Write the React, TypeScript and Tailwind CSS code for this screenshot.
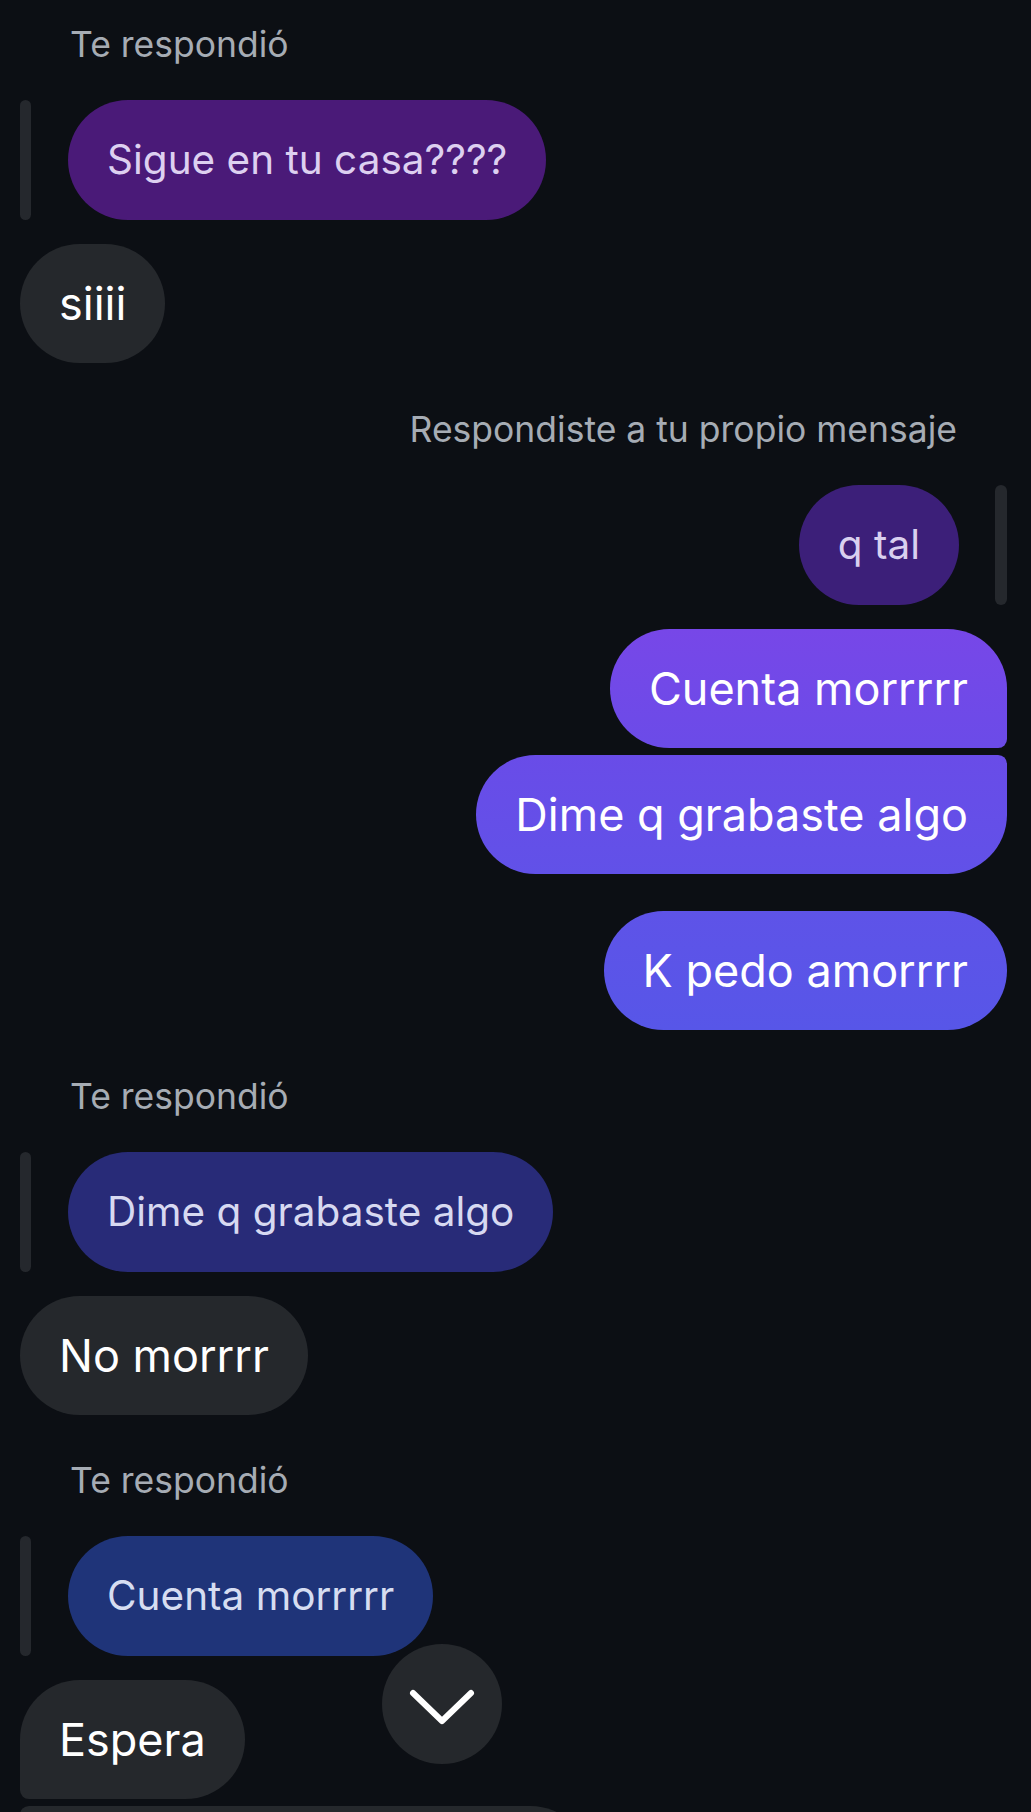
function Label({ text, right }: { text: string; right?: boolean }) {
	return (
		<p className={`text-[35.5px] leading-[42px] text-[#a6acb4] mb-[34px] ${right ? "self-end pr-[50px]" : "pl-[50px]"}`}>
			{text}
		</p>
	)
}

function ReplyIn({ text, bubble }: { text: string; bubble: string }) {
	return (
		<div className="flex items-stretch gap-[37px]">
			<div className="w-[11px] rounded-full bg-[#25282d]" />
			<div className={`rounded-full px-[39px] py-[36px] text-[40.5px] leading-[48px] ${bubble}`}>
				{text}
			</div>
		</div>
	)
}

function ReplyOut({ text, bubble }: { text: string; bubble: string }) {
	return (
		<div className="flex items-stretch gap-[36px] self-end">
			<div className={`rounded-full px-[39px] py-[36px] text-[40.5px] leading-[48px] ${bubble}`}>
				{text}
			</div>
			<div className="w-[12px] rounded-full bg-[#25282d]" />
		</div>
	)
}

function Msg({ text, className }: { text: string; className: string }) {
	return (
		<div className={`px-[39px] py-[36px] text-[45px] leading-[47px] ${className}`}>
			{text}
		</div>
	)
}

export default function App() {
	return (
		<div className="relative h-screen overflow-hidden bg-[#0c0f14] font-['Inter','Noto_Sans',sans-serif]">
			<div className="flex flex-col items-start pl-[20px] pr-[24px] pt-[24px]">
				<Label text="Te respondió" />
				<ReplyIn text="Sigue en tu casa????" bubble="bg-[#4a1a78] text-[#ddd0f0]" />
				<Msg text="siiii" className="mt-[24px] rounded-full bg-[#25282c] text-white" />

				<div className="mt-[46px] flex flex-col self-stretch">
					<Label text="Respondiste a tu propio mensaje" right />
					<ReplyOut text="q tal" bubble="bg-[#3c1f79] text-[#d9d0ef]" />
				</div>
				<Msg
					text="Cuenta morrrrr"
					className="mt-[24px] self-end rounded-[60px] rounded-br-[9px] bg-linear-to-b from-[#7747e8] to-[#6b4be8] text-white"
				/>
				<Msg
					text="Dime q grabaste algo"
					className="mt-[7px] self-end rounded-[60px] rounded-tr-[9px] bg-linear-to-b from-[#694ce8] to-[#6151e8] text-white"
				/>
				<Msg
					text="K pedo amorrrr"
					className="mt-[37px] self-end rounded-full bg-linear-to-b from-[#5e53e8] to-[#5756e8] text-white"
				/>

				<div className="mt-[46px] flex flex-col">
					<Label text="Te respondió" />
					<ReplyIn text="Dime q grabaste algo" bubble="bg-[#282b78] text-[#d7d9f1]" />
				</div>
				<Msg text="No morrrr" className="mt-[24px] rounded-full bg-[#25282c] text-white" />

				<div className="mt-[45px] flex flex-col">
					<Label text="Te respondió" />
					<ReplyIn text="Cuenta morrrrr" bubble="bg-[#1f3479] text-[#d6ddf1]" />
				</div>
				<Msg text="Espera" className="mt-[24px] rounded-[60px] rounded-bl-[9px] bg-[#25282c] text-white" />
				<div className="mt-[7px] h-[119px] w-[570px] rounded-[60px] rounded-tl-[9px] bg-[#25282c]" />
			</div>

			<button className="absolute left-[382px] top-[1644px] flex h-[120px] w-[120px] items-center justify-center rounded-full bg-[#25282c]">
				<svg width="120" height="120" viewBox="0 0 120 120" fill="none">
					<polyline points="31,49 60,77 89,49" stroke="white" strokeWidth="6" strokeLinecap="round" strokeLinejoin="round" />
				</svg>
			</button>
		</div>
	)
}
